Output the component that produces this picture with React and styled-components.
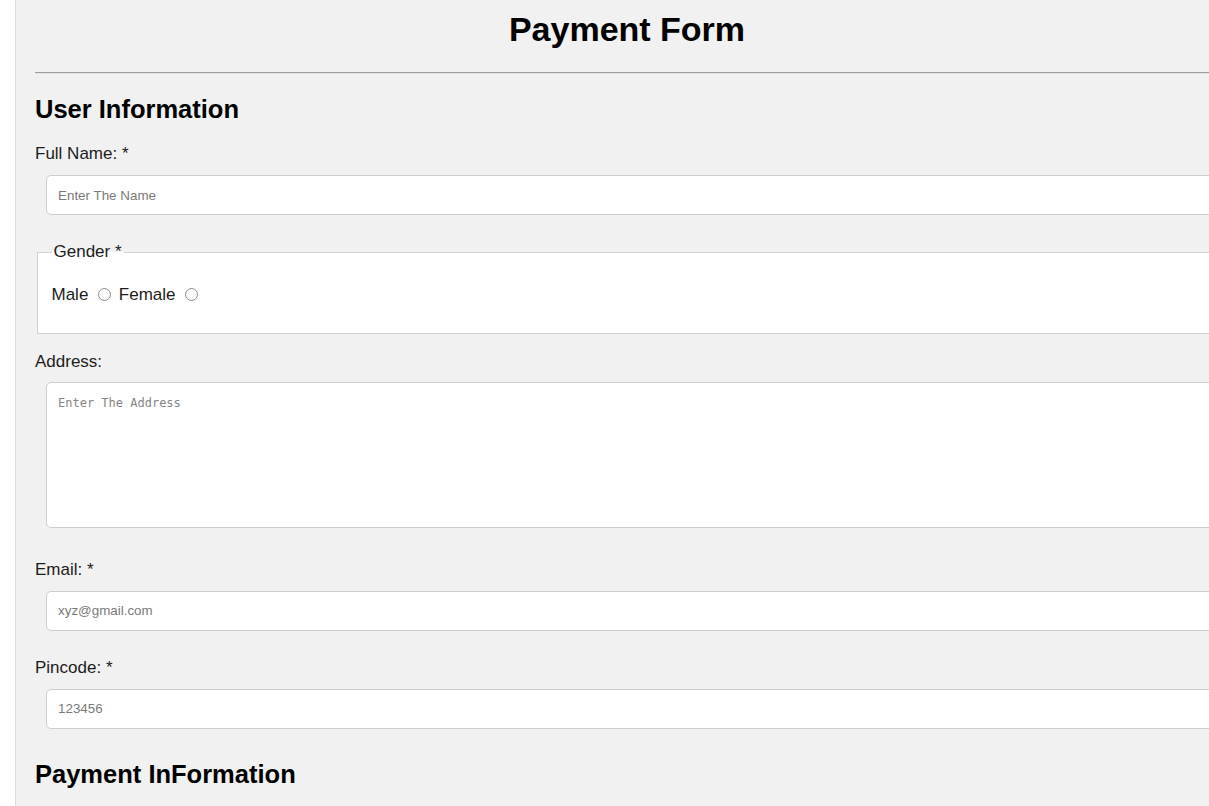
import React from 'react';
import styled, { createGlobalStyle } from 'styled-components';

const GlobalStyle = createGlobalStyle`
  html, body {
    margin: 0;
    padding: 0;
    background: #ffffff;
    overflow: hidden;
  }
  body {
    font-family: "Liberation Sans", Arial, sans-serif;
    color: #1c1c1c;
  }
`;

const Page = styled.div`
  box-sizing: content-box;
  width: 1184px;
  min-height: 100vh;
  margin-left: 15px;
  padding: 0 19px;
  background-color: #f1f1f1;
  border-left: 1px solid #dcdcdc;
  display: flex;
  flex-direction: column;
`;

const Title = styled.h1`
  margin: 10px 0 0;
  font-size: 34px;
  line-height: 39px;
  font-weight: 700;
  color: #000;
  text-align: center;
`;

const Rule = styled.hr`
  width: 100%;
  height: 0;
  margin: 23px 0 0;
  border: 0;
  border-top: 1px solid #9c9c9c;
  border-bottom: 1px solid #e4e4e4;
`;

const SectionTitle = styled.h2`
  margin: ${({ $top }) => $top}px 0 0;
  font-size: 25.5px;
  line-height: 29px;
  font-weight: 700;
  color: #000;
`;

const Field = styled.div`
  display: flex;
  flex-direction: column;
  margin-top: ${({ $top }) => $top}px;
`;

const Label = styled.label`
  display: block;
  font-size: 17px;
  line-height: 20px;
  color: #1c1c1c;
`;

const Input = styled.input`
  box-sizing: border-box;
  height: 40px;
  margin: 11px 0 0 11px;
  padding: 0 11px;
  background: #fff;
  border: 1px solid #cdcdcd;
  border-radius: 5px;
  font-family: "Liberation Sans", Arial, sans-serif;
  font-size: 13.4px;
  outline: none;

  &::placeholder {
    color: #7a7a7a;
  }
`;

const TextArea = styled.textarea`
  box-sizing: border-box;
  height: 146px;
  margin: 10px 0 0 11px;
  padding: 12px 11px;
  background: #fff;
  border: 1px solid #cdcdcd;
  border-radius: 5px;
  font-family: "DejaVu Sans Mono", "Liberation Mono", monospace;
  font-size: 12px;
  line-height: 16px;
  resize: none;
  outline: none;

  &::placeholder {
    color: #858585;
  }
`;

const GenderSet = styled.fieldset`
  margin: 27px 2px 0;
  padding: 6px 12.75px 10.6px 13.5px;
  background: #fff;
  border: 1px solid #d2d2d2;
  font-size: 17px;
  line-height: 20px;
`;

const Legend = styled.legend`
  padding: 0 2px;
  font-size: 17px;
  line-height: 20px;
  color: #1c1c1c;
`;

const Choices = styled.p`
  margin: 17px 0;
  font-size: 17px;
  line-height: 20px;
  color: #1c1c1c;
`;

const Radio = styled.input`
  appearance: none;
  box-sizing: border-box;
  width: 13px;
  height: 13px;
  margin: 3px 3px -1px 5px;
  border: 1px solid #8a8a8a;
  border-radius: 50%;
  background: #fff;
  vertical-align: baseline;
`;

const App = () => (
  <>
    <GlobalStyle />
    <Page>
      <Title>Payment Form</Title>
      <Rule />

      <SectionTitle $top={21}>User Information</SectionTitle>

      <Field $top={20}>
        <Label htmlFor="name">Full Name: *</Label>
        <Input id="name" type="text" placeholder="Enter The Name" />
      </Field>

      <GenderSet>
        <Legend>Gender *</Legend>
        <Choices>
          Male <Radio type="radio" name="gender" value="male" /> Female{' '}
          <Radio type="radio" name="gender" value="female" />
        </Choices>
      </GenderSet>

      <Field $top={18}>
        <Label htmlFor="address">Address:</Label>
        <TextArea id="address" placeholder="Enter The Address" />
      </Field>

      <Field $top={32}>
        <Label htmlFor="email">Email: *</Label>
        <Input id="email" type="email" placeholder="xyz@gmail.com" />
      </Field>

      <Field $top={27}>
        <Label htmlFor="pincode">Pincode: *</Label>
        <Input id="pincode" type="text" placeholder="123456" />
      </Field>

      <SectionTitle $top={31}>Payment InFormation</SectionTitle>
    </Page>
  </>
);

export default App;
